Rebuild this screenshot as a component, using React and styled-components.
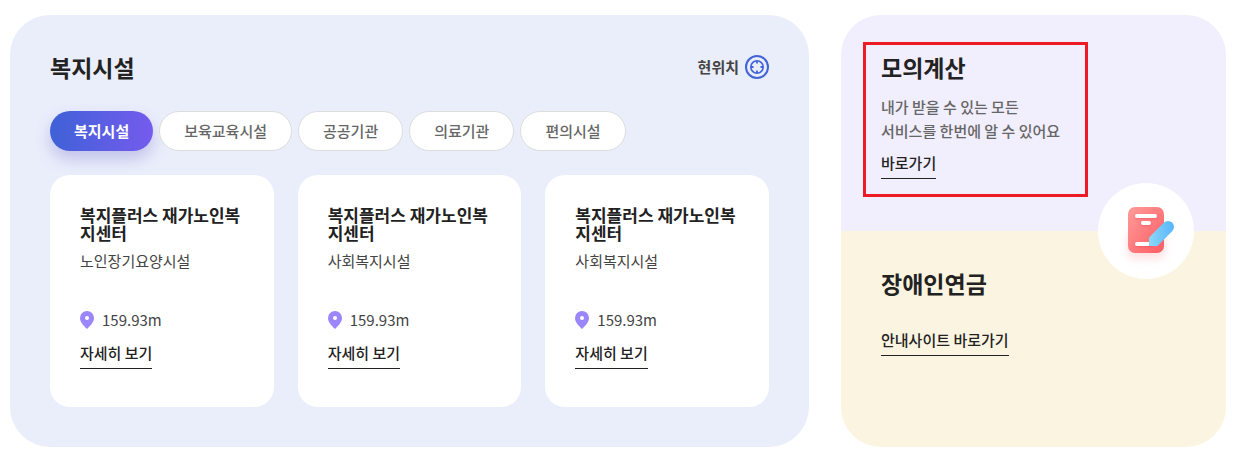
import React, { useState } from "react";
import styled, { createGlobalStyle } from "styled-components";

const GlobalStyle = createGlobalStyle`
    * {
        box-sizing: border-box;
    }

    body {
        margin: 0;
        background-color: #fff;
        color: #222;
        font-family: "Noto Sans CJK KR", "Noto Sans", sans-serif;
        font-size: 15px;
        line-height: 24px;
    }

    h2, h3, p {
        margin: 0;
    }
`;

const Page = styled.main`
    display: grid;
    grid-template-columns: minmax(0, 799fr) minmax(0, 385fr);
    gap: 32px;
    padding: 15px 9px 8px 10px;
`;

const FacilityPanel = styled.section`
    padding: 36px 40px 40px;
    border-radius: 40px;
    background-color: #eaeefb;
`;

const PanelHeader = styled.header`
    display: flex;
    align-items: center;
    justify-content: space-between;
    margin-bottom: 28px;
`;

const Title = styled.h2`
    font-size: 23px;
    font-weight: 700;
    line-height: 32px;
`;

const LocationButton = styled.button`
    display: flex;
    align-items: center;
    gap: 6px;
    padding: 0;
    border: none;
    background: none;
    color: #444;
    font: inherit;
    font-weight: 700;
    cursor: pointer;
`;

const TabList = styled.div`
    display: flex;
    flex-wrap: wrap;
    gap: 6px;
    margin-bottom: 24px;
`;

const Tab = styled.button`
    height: 40px;
    padding: 0 24px;
    border: ${(props) => (props.$active ? "none" : "1px solid #ddd")};
    border-radius: 20px;
    background: ${(props) =>
        props.$active ? "linear-gradient(90deg, #3f61d7, #755bee)" : "#fff"};
    box-shadow: ${(props) =>
        props.$active ? "0 8px 16px rgba(63, 50, 180, 0.24)" : "none"};
    color: ${(props) => (props.$active ? "#fff" : "#666")};
    font: inherit;
    font-weight: ${(props) => (props.$active ? 700 : 500)};
    cursor: pointer;
`;

const CardGrid = styled.div`
    display: grid;
    grid-template-columns: repeat(3, minmax(0, 1fr));
    gap: 24px;
`;

const Card = styled.article`
    padding: 31px 30px 38px;
    border-radius: 20px;
    background-color: #fff;
`;

const CardTitle = styled.h3`
    margin-bottom: 7px;
    font-size: 17px;
    font-weight: 700;
    line-height: 18px;
    word-break: break-all;
`;

const CardType = styled.p`
    margin-bottom: 35px;
    color: #444;
`;

const Distance = styled.p`
    display: flex;
    align-items: center;
    gap: 8px;
    margin-bottom: 9px;
    color: #444;
`;

const MoreLink = styled.a`
    display: block;
    width: fit-content;
    padding-bottom: 3px;
    border-bottom: 1px solid #222;
    color: #222;
    font-weight: 500;
    text-decoration: none;
`;

const SidePanel = styled.aside`
    position: relative;
    display: grid;
    grid-template-rows: 1fr 1fr;
    overflow: hidden;
    border-radius: 40px;
`;

const Calculator = styled.section`
    padding: 27px 22px;
    background-color: #f1eefd;
`;

const Highlight = styled.div`
    width: fit-content;
    padding: 6px 25px 15px 15px;
    border: 3px solid #ed1c24;
`;

const Description = styled.p`
    margin: 12px 0 8px;
    color: #666;
    font-weight: 500;
`;

const Pension = styled.section`
    padding: 36px 40px;
    background-color: #faf4e0;

    ${MoreLink} {
        margin-top: 29px;
    }
`;

const Badge = styled.div`
    position: absolute;
    top: calc(50% - 48px);
    right: 32px;
    display: flex;
    align-items: center;
    justify-content: center;
    width: 96px;
    height: 96px;
    border-radius: 50%;
    background-color: #fff;
`;

const TargetIcon = () => (
    <svg width="24" height="24" viewBox="0 0 24 24" fill="none" stroke="#4163d8" aria-hidden="true">
        <circle cx="12" cy="12" r="11" strokeWidth="2" />
        <circle cx="12" cy="12" r="6.200" strokeWidth="1.600" />
        <path d="M12 6v2.500M12 15.500v2.500M6 12h2.500M15.500 12h2.500" strokeWidth="1.800" />
    </svg>
);

const PinIcon = () => (
    <svg width="14" height="18" viewBox="0 0 14 18" aria-hidden="true">
        <path
            d="M7 0a7 7 0 0 0-7 7c0 4.7 4.3 8.3 7 11 2.7-2.7 7-6.300 7-11a7 7 0 0 0-7-7Z"
            fill="#9b87fb"
        />
        <circle cx="7" cy="7" r="2" fill="#fff" />
    </svg>
);

const DocumentIcon = () => (
    <svg width="96" height="96" viewBox="0 0 96 96" aria-hidden="true">
        <defs>
            <linearGradient id="paper" x1="0" y1="0" x2="1" y2="1">
                <stop offset="0" stopColor="#ff9c9a" />
                <stop offset="1" stopColor="#ff5c63" />
            </linearGradient>
            <linearGradient id="pencil" x1="0" y1="0" x2="1" y2="0">
                <stop offset="0" stopColor="#8bd8f8" />
                <stop offset="1" stopColor="#56b5fa" />
            </linearGradient>
            <filter id="glow" x="-50%" y="-50%" width="200%" height="200%">
                <feGaussianBlur stdDeviation="4" />
            </filter>
            <filter id="lineShadow" x="-20%" y="-50%" width="140%" height="250%">
                <feDropShadow dx="0" dy="1" stdDeviation="1" floodColor="#e03c48" floodOpacity="0.45" />
            </filter>
        </defs>
        <rect x="29" y="48" width="38" height="28" rx="8" fill="#ff6b70" opacity="0.2" filter="url(#glow)" />
        <rect x="30" y="24" width="36" height="46" rx="7" fill="url(#paper)" />
        <g fill="#fff" filter="url(#lineShadow)">
            <rect x="37" y="31" width="22" height="4" rx="2" />
            <rect x="43" y="38" width="10" height="4" rx="2" />
            <rect x="37" y="59" width="18" height="4" rx="2" />
        </g>
        <path
            d="M51 63v-8.500l14.800-14.800a5.800 5.800 0 0 1 8.500 8.300L59.500 63Z"
            fill="url(#pencil)"
        />
    </svg>
);

const categories = ["복지시설", "보육교육시설", "공공기관", "의료기관", "편의시설"];

const facilities = [
    { id: 1, name: "복지플러스 재가노인복지센터", type: "노인장기요양시설", distance: "159.93m" },
    { id: 2, name: "복지플러스 재가노인복지센터", type: "사회복지시설", distance: "159.93m" },
    { id: 3, name: "복지플러스 재가노인복지센터", type: "사회복지시설", distance: "159.93m" },
];

const App = () => {
    const [category, setCategory] = useState(categories[0]);

    return (
        <>
            <GlobalStyle />
            <Page>
                <FacilityPanel>
                    <PanelHeader>
                        <Title>복지시설</Title>
                        <LocationButton type="button">
                            현위치
                            <TargetIcon />
                        </LocationButton>
                    </PanelHeader>
                    <TabList role="tablist">
                        {categories.map((name) => (
                            <Tab
                                key={name}
                                type="button"
                                role="tab"
                                aria-selected={name === category}
                                $active={name === category}
                                onClick={() => setCategory(name)}
                            >
                                {name}
                            </Tab>
                        ))}
                    </TabList>
                    <CardGrid>
                        {facilities.map((facility) => (
                            <Card key={facility.id}>
                                <CardTitle>{facility.name}</CardTitle>
                                <CardType>{facility.type}</CardType>
                                <Distance>
                                    <PinIcon />
                                    {facility.distance}
                                </Distance>
                                <MoreLink href="#detail">자세히 보기</MoreLink>
                            </Card>
                        ))}
                    </CardGrid>
                </FacilityPanel>
                <SidePanel>
                    <Calculator>
                        <Highlight>
                            <Title>모의계산</Title>
                            <Description>
                                내가 받을 수 있는 모든
                                <br />
                                서비스를 한번에 알 수 있어요
                            </Description>
                            <MoreLink href="#calculator">바로가기</MoreLink>
                        </Highlight>
                    </Calculator>
                    <Pension>
                        <Title>장애인연금</Title>
                        <MoreLink href="#pension">안내사이트 바로가기</MoreLink>
                    </Pension>
                    <Badge>
                        <DocumentIcon />
                    </Badge>
                </SidePanel>
            </Page>
        </>
    );
};

export default App;
